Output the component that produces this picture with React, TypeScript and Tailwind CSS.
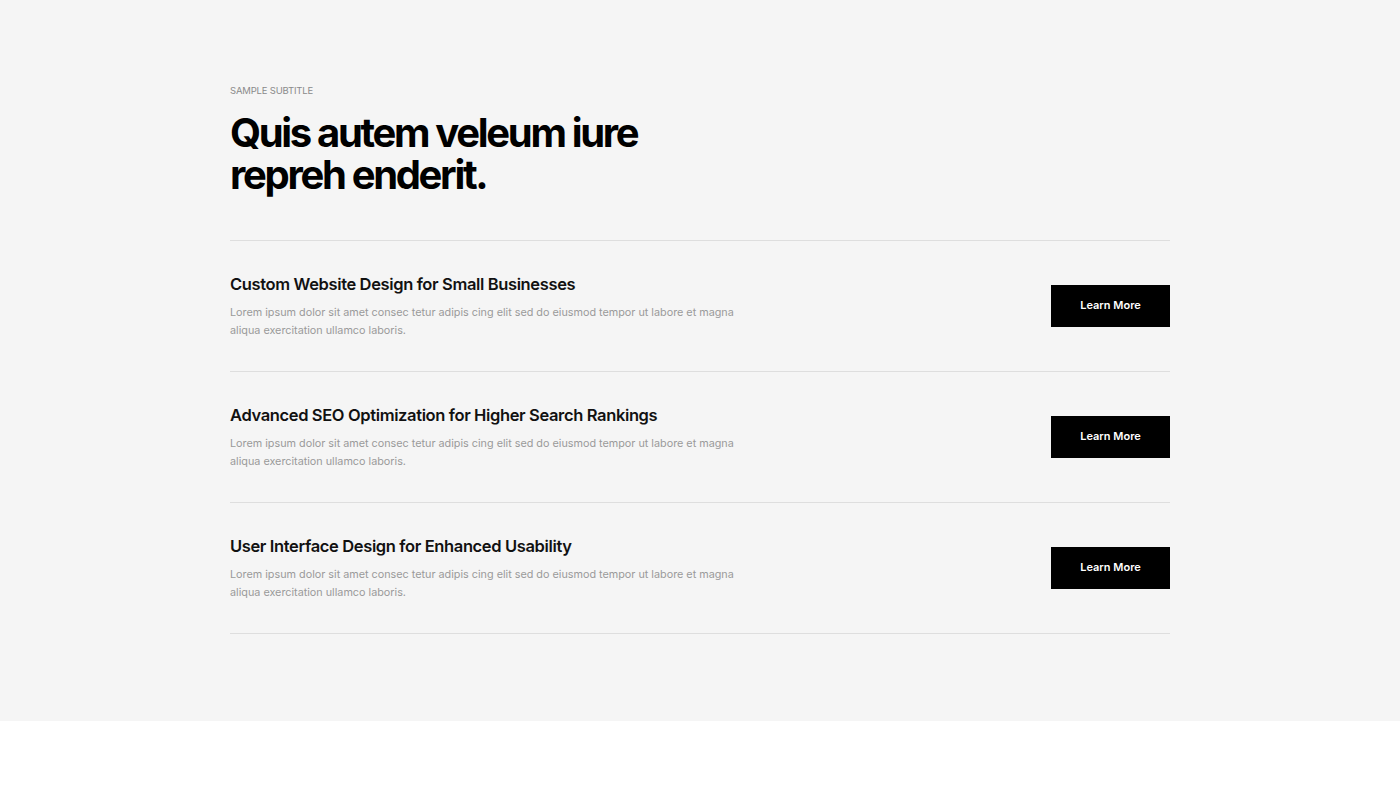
const services = [
  "Custom Website Design for Small Businesses",
  "Advanced SEO Optimization for Higher Search Rankings",
  "User Interface Design for Enhanced Usability",
];

export default function App() {
  return (
    <div className="min-h-screen bg-white" style={{ fontFamily: "Inter, 'Noto Sans', sans-serif" }}>
      <section className="bg-[#f5f5f5] pt-[84px] pb-[87px]">
        <div className="mx-auto w-[940px]">
          <p className="text-[9.5px] uppercase text-[#8a8a8a] tracking-[-0.02em] leading-[14px]">Sample Subtitle</p>
          <h2 className="mt-[14px] w-[440px] text-[40px] leading-[42px] font-bold tracking-[-0.058em] text-black">
            Quis autem veleum iure repreh enderit.
          </h2>
          <div className="mt-[44px] border-t border-[#dedede]">
            {services.map((title) => (
              <div key={title} className="flex items-center justify-between border-b border-[#dedede] pt-[31px] pb-[32px]">
                <div>
                  <h3 className="text-[16.5px] leading-[24px] font-semibold tracking-[-0.022em] text-[#111]">{title}</h3>
                  <p className="mt-[8px] w-[520px] text-[10.8px] leading-[17.5px] text-[#9a9a9a]">
                    Lorem ipsum dolor sit amet consec tetur adipis cing elit sed do eiusmod tempor ut labore et magna aliqua exercitation ullamco laboris.
                  </p>
                </div>
                <button className="h-[42px] w-[119px] bg-black text-white text-[11px] font-semibold">Learn More</button>
              </div>
            ))}
          </div>
        </div>
      </section>
    </div>
  );
}
